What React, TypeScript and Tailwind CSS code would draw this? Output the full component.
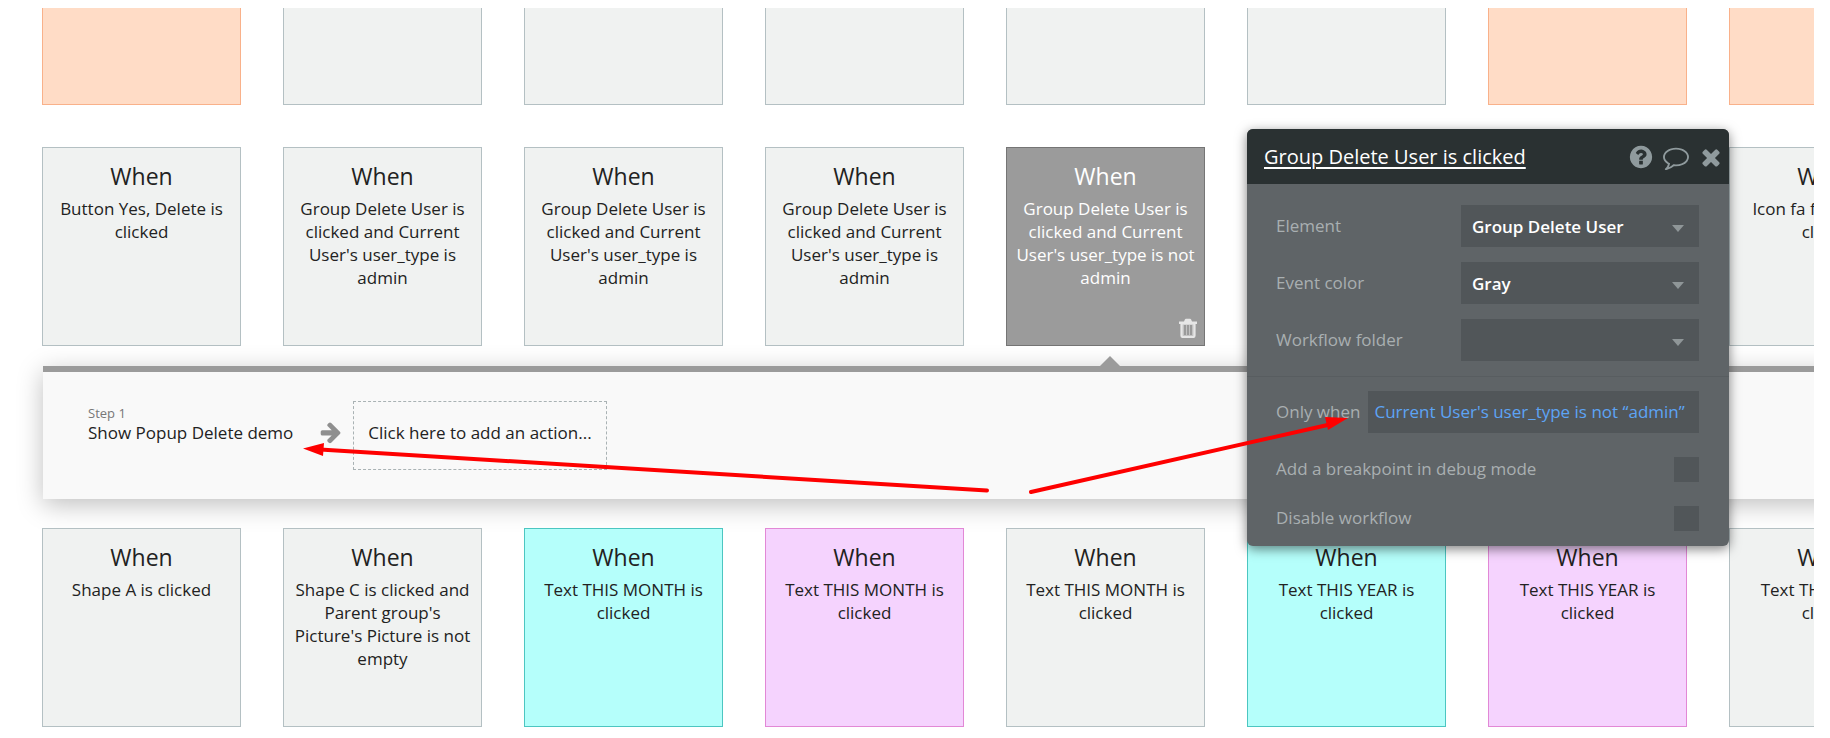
import React from "react";

type Tone = "gray" | "peach" | "cyan" | "pink" | "active";

const tones: Record<Tone, string> = {
  gray: "bg-[#f0f2f1] border-[#b4c0c3] text-[#222]",
  peach: "bg-[#ffdcc6] border-[#f9b18a] text-[#222]",
  cyan: "bg-[#b5fffb] border-[#4cc6c1] text-[#222]",
  pink: "bg-[#f5d3fe] border-[#e288d6] text-[#222]",
  active: "bg-[#9b9b9b] border-[#757575] text-white",
};

type Item = { tone: Tone; text: string };

const hiddenRow: Tone[] = ["peach", "gray", "gray", "gray", "gray", "gray", "peach", "peach"];

const middleRow: Item[] = [
  { tone: "gray", text: "Button Yes, Delete is clicked" },
  { tone: "gray", text: "Group Delete User is clicked and Current User's user_type is admin" },
  { tone: "gray", text: "Group Delete User is clicked and Current User's user_type is admin" },
  { tone: "gray", text: "Group Delete User is clicked and Current User's user_type is admin" },
  { tone: "active", text: "Group Delete User is clicked and Current User's user_type is not admin" },
  { tone: "gray", text: "" },
  { tone: "gray", text: "" },
  { tone: "gray", text: "Icon fa fa-refresh is clicked" },
];

const bottomRow: Item[] = [
  { tone: "gray", text: "Shape A is clicked" },
  { tone: "gray", text: "Shape C is clicked and Parent group's Picture's Picture is not empty" },
  { tone: "cyan", text: "Text THIS MONTH is clicked" },
  { tone: "pink", text: "Text THIS MONTH is clicked" },
  { tone: "gray", text: "Text THIS MONTH is clicked" },
  { tone: "cyan", text: "Text THIS YEAR is clicked" },
  { tone: "pink", text: "Text THIS YEAR is clicked" },
  { tone: "gray", text: "Text THIS YEAR is clicked" },
];

const row = "grid grid-flow-col auto-cols-[199px] gap-[42px] pl-[42px]";

function Icon({ d, className }: { d: string; className: string }) {
  return (
    <svg viewBox="0 0 1792 1792" fill="currentColor" className={className} aria-hidden="true">
      <path d={d} />
    </svg>
  );
}

const TIMES =
  "M1490 1322q0 40-28 68l-136 136q-28 28-68 28t-68-28l-294-294-294 294q-28 28-68 28t-68-28l-136-136q-28-28-28-68t28-68l294-294-294-294q-28-28-28-68t28-68l136-136q28-28 68-28t68 28l294 294 294-294q28-28 68-28t68 28l136 136q28 28 28 68t-28 68l-294 294 294 294q28 28 28 68z";
const QUESTION =
  "M1024 1376v-192q0-14-9-23t-23-9h-192q-14 0-23 9t-9 23v192q0 14 9 23t23 9h192q14 0 23-9t9-23zm256-672q0-88-55.5-163t-138.5-116-170-41q-243 0-371 213-15 24 8 42l132 100q7 6 19 6 16 0 25-12 53-68 86-92 34-24 86-24 48 0 85.5 26t37.5 59q0 38-20 61t-68 45q-63 28-115.5 86.5t-52.5 125.5v36q0 14 9 23t23 9h192q14 0 23-9t9-23q0-19 21.5-49.5t54.5-49.5q32-18 49-28.5t46-35 44.5-48 28-60.5 12.5-81zm384 192q0 209-103 385.5t-279.5 279.5-385.5 103-385.5-103-279.5-279.5-103-385.5 103-385.5 279.5-279.5 385.5-103 385.5 103 279.5 279.5 103 385.5z";
const COMMENT =
  "M896 384q-204 0-381.5 69.5t-282 187.5-104.5 255q0 112 71.5 213.5t201.5 175.5l87 50-27 96q-24 91-70 172 152-63 275-171l43-38 57 6q69 8 130 8 204 0 381.5-69.5t282-187.5 104.5-255-104.5-255-282-187.5-381.5-69.5zm896 512q0 174-120 321.5t-326 233-450 85.5q-70 0-145-8-198 175-460 242-49 14-114 22h-5q-15 0-27-10.5t-16-27.5v-1q-3-4-.5-12t2-10 4.5-9.5l6-9 7-8.5 8-9q7-8 31-34.5t34.5-38 31-39.5 32.5-51 27-59 26-76q-157-89-247.5-220t-90.5-281q0-130 71-248.5t191-204.5 286-136.5 348-50.5 348 50.5 286 136.5 191 204.5 71 248.5z";
const ARROW =
  "M1600 960q0 54-37 91l-651 651q-39 37-91 37-51 0-90-37l-75-75q-38-38-38-91t38-91l293-293h-704q-52 0-84.5-37.5t-32.5-90.5v-128q0-53 32.5-90.5t84.5-37.5h704l-293-294q-38-36-38-90t38-90l75-75q38-38 90-38 53 0 91 38l651 651q37 35 37 90z";

function EventCard({ tone, text }: Item) {
  return (
    <article className={`relative flex h-[199px] flex-col items-center border px-1.5 pt-3.5 text-center ${tones[tone]}`}>
      {text && <h2 className="text-[23px] leading-7">When</h2>}
      <p className="mt-[7px] text-[17px] leading-[23px]">{text}</p>
      {tone === "active" && (
        <button type="button" aria-label="Delete event" className="absolute right-[7px] bottom-[7px] text-[#e6e6e6]">
          <svg viewBox="0 0 18 20" className="h-5 w-[18px]" aria-hidden="true">
            <path d="M2.500 5.500h13v12q0 1.500-1.500 1.500H4q-1.500 0-1.500-1.500z" fill="#c2c2c2" stroke="currentColor" strokeWidth="2.200" />
            <path d="M0 3.500h5L6 1.200Q6.200.8 6.800.8h4.400q.6 0 .8.400l1 2.300h5v2.400H0z" fill="currentColor" />
            <path d="M6 7v10M9 7v10M12 7v10" stroke="#858585" strokeWidth="1.300" />
          </svg>
        </button>
      )}
    </article>
  );
}

function StepPanel() {
  return (
    <section className="relative mt-5 -mr-10 ml-[43px] flex h-[133px] items-start border-t-[6px] border-[#9b9b9b] bg-[#f9f9f9] pt-[29px] pl-[45px] shadow-[0_6px_24px_rgba(0,0,0,0.25)]">
      <svg viewBox="0 0 20 10" className="absolute -top-4 left-[1057px] h-2.5 w-5 text-[#9b9b9b]" aria-hidden="true">
        <path d="M0 10 10 0l10 10z" fill="currentColor" />
      </svg>
      <button type="button" className="pt-1 text-left">
        <span className="block text-[13px] leading-4 text-[#777]">Step 1</span>
        <span className="block text-[17px] leading-6 text-[#222]">Show Popup Delete demo</span>
      </button>
      <Icon d={ARROW} className="mt-[19px] ml-[26px] size-6 text-[#8f8f8f]" />
      <button type="button" className="ml-2.5 h-[69px] border border-dashed border-[#a9b2b4] px-3.5 pb-1.5 text-[17px] text-[#222]">
        Click here to add an action...
      </button>
    </section>
  );
}

function SelectRow({ id, label, value }: { id: string; label: string; value: string }) {
  return (
    <div className="flex items-center justify-between">
      <label htmlFor={id}>{label}</label>
      <div className="relative w-[238px]">
        <select id={id} defaultValue={value} className="h-[42px] w-full appearance-none bg-[#515659] pt-0.5 pr-10 pl-[11px] font-semibold text-white outline-none">
          <option>{value}</option>
        </select>
        <svg viewBox="0 0 12 7" className="pointer-events-none absolute top-5 right-[15px] h-[7px] w-3 text-[#8f9698]" aria-hidden="true">
          <path d="M0 0h12L6 7z" fill="currentColor" />
        </svg>
      </div>
    </div>
  );
}

function CheckRow({ id, label }: { id: string; label: string }) {
  return (
    <div className="flex items-center justify-between">
      <label htmlFor={id} className="pb-0.5 leading-[23px]">{label}</label>
      <input id={id} type="checkbox" className="size-[25px] appearance-none bg-[#515659]" />
    </div>
  );
}

function PropertyDialog() {
  return (
    <div role="dialog" aria-label="Group Delete User is clicked" className="absolute top-[129px] left-[1247px] w-[482px] overflow-hidden rounded-md bg-[#5f6467] text-[17px] text-[#a9afb1] shadow-[0_3px_12px_rgba(0,0,0,0.5)]">
      <header className="flex h-[55px] items-center bg-[#2a3132] pr-[5px] pl-[17px] text-[#8f9a9d]">
        <h2 className="grow text-[20px] text-white underline underline-offset-3">Group Delete User is clicked</h2>
        <button type="button" aria-label="Help"><Icon d={QUESTION} className="size-[26px]" /></button>
        <button type="button" aria-label="Comment" className="ml-[9px]"><Icon d={COMMENT} className="size-[26px]" /></button>
        <button type="button" aria-label="Close" className="ml-[9px]"><Icon d={TIMES} className="size-[26px]" /></button>
      </header>
      <div className="flex flex-col gap-[15px] pt-[21px] pr-[30px] pb-[15px] pl-[29px]">
        <SelectRow id="element" label="Element" value="Group Delete User" />
        <SelectRow id="color" label="Event color" value="Gray" />
        <SelectRow id="folder" label="Workflow folder" value="" />
      </div>
      <div className="flex flex-col gap-6 border-t border-[#585d60] pt-3.5 pr-[30px] pb-[15px] pl-[29px]">
        <div className="flex items-center gap-2">
          <label htmlFor="only">Only when</label>
          <input id="only" type="text" defaultValue="Current User's user_type is not “admin”" className="h-[42px] min-w-0 grow bg-[#515659] pb-0.5 pl-1.5 text-[#5da4f5] outline-none" />
        </div>
        <CheckRow id="breakpoint" label="Add a breakpoint in debug mode" />
        <CheckRow id="disable" label="Disable workflow" />
      </div>
    </div>
  );
}

export default function App() {
  return (
    <main className="relative overflow-hidden bg-white pt-2 pr-4 pb-[11px] font-['Open_Sans','Noto_Sans',sans-serif]">
      <div className="overflow-hidden">
        <div className={row}>
          {hiddenRow.map((tone, i) => (
            <div key={i} className={`h-[97px] border border-t-0 ${tones[tone]}`} />
          ))}
        </div>
        <div className={`mt-[42px] ${row}`}>
          {middleRow.map((item, i) => <EventCard key={i} {...item} />)}
        </div>
        <StepPanel />
        <div className={`relative mt-[29px] ${row}`}>
          {bottomRow.map((item, i) => <EventCard key={i} {...item} />)}
        </div>
      </div>
      <PropertyDialog />
      <svg viewBox="303 400 1046 100" className="pointer-events-none absolute top-[400px] left-[303px] h-[100px] w-[1046px]" aria-hidden="true">
        <g stroke="#fe0000" strokeWidth="4" strokeLinecap="round" fill="#fe0000">
          <path d="M320 449.500 987 490.500M1031 492 1332 424" />
          <path stroke="none" d="M303 448.500 324 443 323 456zM1348 418 1325 417 1328 430z" />
        </g>
      </svg>
    </main>
  );
}
